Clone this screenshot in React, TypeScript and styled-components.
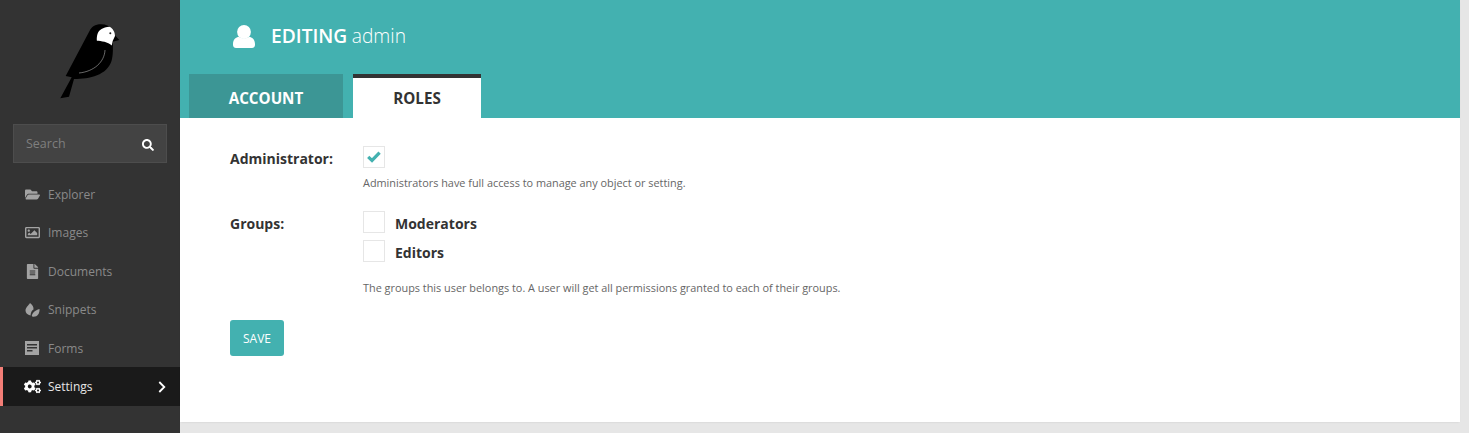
import React from "react";
import styled, { createGlobalStyle } from "styled-components";
import { FaCogs, FaFileAlt, FaFolderOpen, FaRegImage, FaSearch } from "react-icons/fa";

const teal = "#43b1b0";

const GlobalStyle = createGlobalStyle`
  html, body {
    margin: 0;
    height: 100%;
    background: #e6e6e6;
    font-family: "Open Sans", "Liberation Sans", sans-serif;
    overflow: hidden;
  }
`;

const Logo: React.FC = () => (
  <svg width="180" height="124" viewBox="0 0 180 124">
    <path
      fill="#000"
      d="M101 24.3C95 24.3 91.5 27 89.5 31L65.7 76L71.7 77.3L60.3 98.3L69 96.7L74 79C90 79 107 75 111.5 61C113.3 55 113 47 112.7 41.7L119.3 40L114.8 35L113.5 30C110 26 106 24.4 101 24.3Z"
    />
    <path fill="#fff" d="M109.3 26.7C103 27.5 99 29.5 97.5 34C96.8 36.5 96.6 39 96.9 40.8C101 41 108 42 111.7 45.5L112.7 41L115 36C115 32 113 28 109.3 26.7Z" />
    <circle cx="110.3" cy="33.2" r="1" fill="#222" />
    <path fill="none" stroke="#cfcfcf" strokeWidth="0.5" d="M105 50C104.5 62 94 71.5 79 73" />
  </svg>
);

const SnippetIcon: React.FC = () => (
  <svg width="15" height="14" viewBox="0 0 15 14">
    <path fill="currentColor" d="M5 0C7.5 1.8 8.8 4 8.5 6.5C7 7.5 5.8 9 5.5 12.5C2.5 12 0.5 10 0.5 7.5C0.5 4.5 3.5 2.5 5 0Z" />
    <path fill="currentColor" d="M14.5 6C14.8 10.5 12.5 13.6 8.6 13.8C7.6 13.8 7 13.4 6.8 12.8C7.2 9.8 10 7.2 14.5 6Z" />
  </svg>
);

const FormIcon: React.FC = () => (
  <svg width="14" height="14" viewBox="0 0 14 14">
    <path fill="currentColor" fillRule="evenodd" d="M0 0H14V14H0ZM2 3V4.5H12V3ZM2 6V7.5H12V6ZM2 9V10.5H7.5V9Z" />
  </svg>
);

const UserIcon: React.FC = () => (
  <TitleGlyph width="22" height="23" viewBox="0 0 22 23">
    <circle cx="11" cy="7" r="6.9" fill="currentColor" />
    <path
      fill="currentColor"
      d="M0 19C0 14.5 3 12 6 11.7C8 14 14 14 16 11.7C19 12 22 14.5 22 19V20C22 22 20.5 23 19 23H3C1.5 23 0 22 0 20Z"
    />
  </TitleGlyph>
);

const CheckIcon: React.FC = () => (
  <svg width="14" height="12" viewBox="0 0 14 12">
    <path fill="none" stroke="currentColor" strokeWidth="3.2" d="M1.2 5.8L5 9.4L12.6 1.6" />
  </svg>
);

const ChevronIcon: React.FC = () => (
  <ChevronGlyph width="8" height="12" viewBox="0 0 8 12">
    <path fill="none" stroke="currentColor" strokeWidth="1.8" d="M1.3 1L6.3 6L1.3 11" />
  </ChevronGlyph>
);

const Page = styled.div`
  display: flex;
  width: 1469px;
  height: 433px;
`;

const Sidebar = styled.nav`
  flex: 0 0 180px;
  background: #333;
  display: flex;
  flex-direction: column;
`;

const SearchBox = styled.div`
  box-sizing: border-box;
  display: flex;
  align-items: center;
  justify-content: space-between;
  height: 39px;
  margin: 0 13px 12px;
  padding: 0 12px;
  background: #434343;
  border: 1px solid #4d4d4d;
  color: #7f7f7f;
  font-size: 12.5px;
`;

const SearchIcon = styled(FaSearch)`
  color: #fff;
  font-size: 12px;
  margin-top: 2px;
`;

const MenuList = styled.ul`
  list-style: none;
  margin: 0;
  padding: 0;
`;

const MenuRow = styled.li<{ $active?: boolean }>`
  box-sizing: border-box;
  display: flex;
  align-items: center;
  height: ${(p) => (p.$active ? "39px" : "38.5px")};
  margin-top: ${(p) => (p.$active ? "-0.5px" : "0")};
  padding-left: ${(p) => (p.$active ? "20px" : "23px")};
  border-left: ${(p) => (p.$active ? "3px solid #f37e77" : "0")};
  background: ${(p) => (p.$active ? "#1a1a1a" : "transparent")};
  color: ${(p) => (p.$active ? "#e6e6e6" : "#8a8a8a")};
  font-size: 12px;
`;

const MenuIcon = styled.span<{ $active?: boolean }>`
  flex: 0 0 18px;
  margin-right: 7px;
  display: flex;
  align-items: center;
  justify-content: center;
  color: ${(p) => (p.$active ? "#fff" : "#a3a3a3")};
  font-size: ${(p) => (p.$active ? "17px" : "15px")};
`;

const ChevronGlyph = styled.svg`
  margin-left: auto;
  margin-right: 14px;
  color: #fff;
`;

const Main = styled.main`
  flex: 0 0 1280px;
  height: 422px;
  background: #fff;
  box-shadow: 0 1px 2px -1px rgba(0, 0, 0, 0.12);
`;

const Header = styled.header`
  background: ${teal};
  height: 118px;
  display: flex;
  flex-direction: column;
  justify-content: flex-end;
`;

const TitleRow = styled.div`
  box-sizing: border-box;
  display: flex;
  align-items: center;
  height: 74px;
  padding: 0 0 4px 53px;
  color: #fff;
  font-size: 19.2px;
`;

const TitleGlyph = styled.svg`
  margin: 3px 16px 0 0;
`;

const TitleStrong = styled.strong`
  font-weight: 600;
  margin-right: 4.5px;
`;

const TitleLight = styled.span`
  font-weight: 300;
`;

const Tabs = styled.div`
  display: flex;
  gap: 10px;
  padding-left: 9px;
`;

const Tab = styled.div<{ $active?: boolean }>`
  box-sizing: border-box;
  display: flex;
  align-items: center;
  justify-content: center;
  height: 44px;
  width: ${(p) => (p.$active ? "128px" : "154px")};
  padding-top: ${(p) => (p.$active ? "0" : "4px")};
  border-top: ${(p) => (p.$active ? "4px solid #333" : "0")};
  background: ${(p) => (p.$active ? "#fff" : "#3c9695")};
  color: ${(p) => (p.$active ? "#333" : "#fff")};
  font-size: 15.2px;
  font-weight: 700;
`;

const Form = styled.form`
  padding: 28px 50px 0;
  display: flex;
  flex-direction: column;
`;

const Field = styled.div<{ $gap: number }>`
  display: grid;
  grid-template-columns: 133px 1fr;
  margin-bottom: ${(p) => p.$gap}px;
`;

const Label = styled.label`
  padding-top: 2px;
  font-size: 14px;
  font-weight: 700;
  color: #333;
  line-height: 22px;
`;

const Control = styled.div`
  display: flex;
  flex-direction: column;
`;

const CheckRow = styled.div`
  display: flex;
  align-items: center;
  gap: 10px;
  height: 22px;
  margin-bottom: 7px;
  font-size: 14px;
  font-weight: 700;
  color: #333;
`;

const CheckText = styled.span`
  padding-top: 3px;
`;

const Box = styled.span`
  box-sizing: border-box;
  flex: 0 0 22px;
  height: 22px;
  display: flex;
  align-items: center;
  justify-content: center;
  border: 1px solid #e6e6e6;
  color: ${teal};
`;

const Help = styled.p<{ $top: number }>`
  margin: ${(p) => p.$top}px 0 0;
  font-size: 10.88px;
  line-height: 16px;
  color: #666;
`;

const SaveButton = styled.button`
  width: 54px;
  height: 36px;
  padding: 0;
  border: 0;
  border-radius: 3px;
  background: ${teal};
  color: #fff;
  font-family: inherit;
  font-size: 12px;
  text-transform: uppercase;
`;

const menu = [
  { label: "Explorer", icon: <FaFolderOpen /> },
  { label: "Images", icon: <FaRegImage /> },
  { label: "Documents", icon: <FaFileAlt /> },
  { label: "Snippets", icon: <SnippetIcon /> },
  { label: "Forms", icon: <FormIcon /> },
];

const App: React.FC = () => (
  <Page>
    <GlobalStyle />
    <Sidebar>
      <Logo />
      <SearchBox>
        Search
        <SearchIcon />
      </SearchBox>
      <MenuList>
        {menu.map((item) => (
          <MenuRow key={item.label}>
            <MenuIcon>{item.icon}</MenuIcon>
            {item.label}
          </MenuRow>
        ))}
        <MenuRow $active>
          <MenuIcon $active>
            <FaCogs />
          </MenuIcon>
          Settings
          <ChevronIcon />
        </MenuRow>
      </MenuList>
    </Sidebar>
    <Main>
      <Header>
        <TitleRow>
          <UserIcon />
          <TitleStrong>EDITING</TitleStrong>
          <TitleLight>admin</TitleLight>
        </TitleRow>
        <Tabs>
          <Tab>ACCOUNT</Tab>
          <Tab $active>ROLES</Tab>
        </Tabs>
      </Header>
      <Form>
        <Field $gap={20}>
          <Label>Administrator:</Label>
          <Control>
            <CheckRow>
              <Box>
                <CheckIcon />
              </Box>
            </CheckRow>
            <Help $top={0}>Administrators have full access to manage any object or setting.</Help>
          </Control>
        </Field>
        <Field $gap={24}>
          <Label>Groups:</Label>
          <Control>
            <CheckRow>
              <Box />
              <CheckText>Moderators</CheckText>
            </CheckRow>
            <CheckRow>
              <Box />
              <CheckText>Editors</CheckText>
            </CheckRow>
            <Help $top={11}>The groups this user belongs to. A user will get all permissions granted to each of their groups.</Help>
          </Control>
        </Field>
        <div>
          <SaveButton type="button">Save</SaveButton>
        </div>
      </Form>
    </Main>
  </Page>
);

export default App;
